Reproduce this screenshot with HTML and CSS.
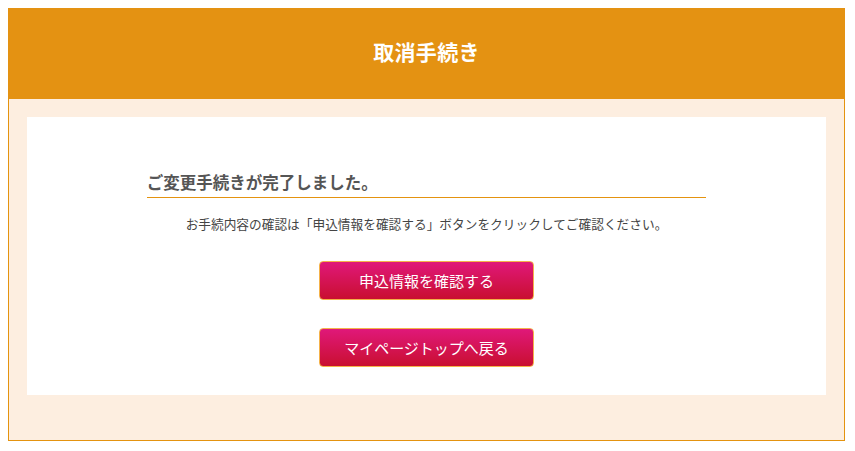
FILE: index.html
```html
<!DOCTYPE html>
<html lang="ja">
<head>
<meta charset="utf-8">
<title>取消手続き</title>
<link rel="stylesheet" href="styles.css">
</head>
<body>
<div class="frame">
  <header class="head"><h1>取消手続き</h1></header>
  <main class="area">
    <section class="card">
      <h2 class="title">ご変更手続きが完了しました。</h2>
      <p class="note">お手続内容の確認は「申込情報を確認する」ボタンをクリックしてご確認ください。</p>
      <div class="actions">
        <a class="btn" href="#">申込情報を確認する</a>
        <a class="btn" href="#">マイページトップへ戻る</a>
      </div>
    </section>
  </main>
</div>
</body>
</html>
```

FILE: styles.css
```css
* { box-sizing: border-box; }
html, body { background: #fff; }
body {
  margin: 8px;
  font-family: "Noto Sans CJK JP", "Noto Sans", sans-serif;
  color: #333;
}
.frame {
  width: 837px;
  border: 1px solid #e4930f;
  border-top: 0;
}
.head {
  background: #e49212;
  height: 91px;
  margin: 0 -1px;
  padding-bottom: 5px;
  display: flex;
  align-items: center;
  justify-content: center;
}
.head h1 {
  margin: 0;
  color: #fff;
  font-size: 21px;
  font-weight: bold;
  letter-spacing: 0.3px;
}
.area {
  background: #fdeee0;
  padding: 18px 18px 45px;
}
.card {
  background: #fff;
  height: 278px;
  padding-top: 51px;
}
.title {
  width: 70%;
  margin: 0 auto;
  font-size: 16.5px;
  font-weight: bold;
  color: #555;
  line-height: 29px;
  border-bottom: 1px solid #e4930f;
  padding-left: 0;
}
.note {
  margin: 16px 0 0;
  text-align: center;
  font-size: 12.7px;
  color: #444;
  line-height: 20px;
}
.actions {
  margin-top: 27px;
  display: flex;
  flex-direction: column;
  align-items: center;
  gap: 28px;
}
.btn {
  display: flex;
  align-items: center;
  justify-content: center;
  width: 215px;
  height: 39px;
  border: 1px solid #f4b24a;
  border-radius: 4px;
  background: linear-gradient(#e0187a, #c90f30);
  color: #fff;
  text-decoration: none;
  font-size: 15px;
}
```
